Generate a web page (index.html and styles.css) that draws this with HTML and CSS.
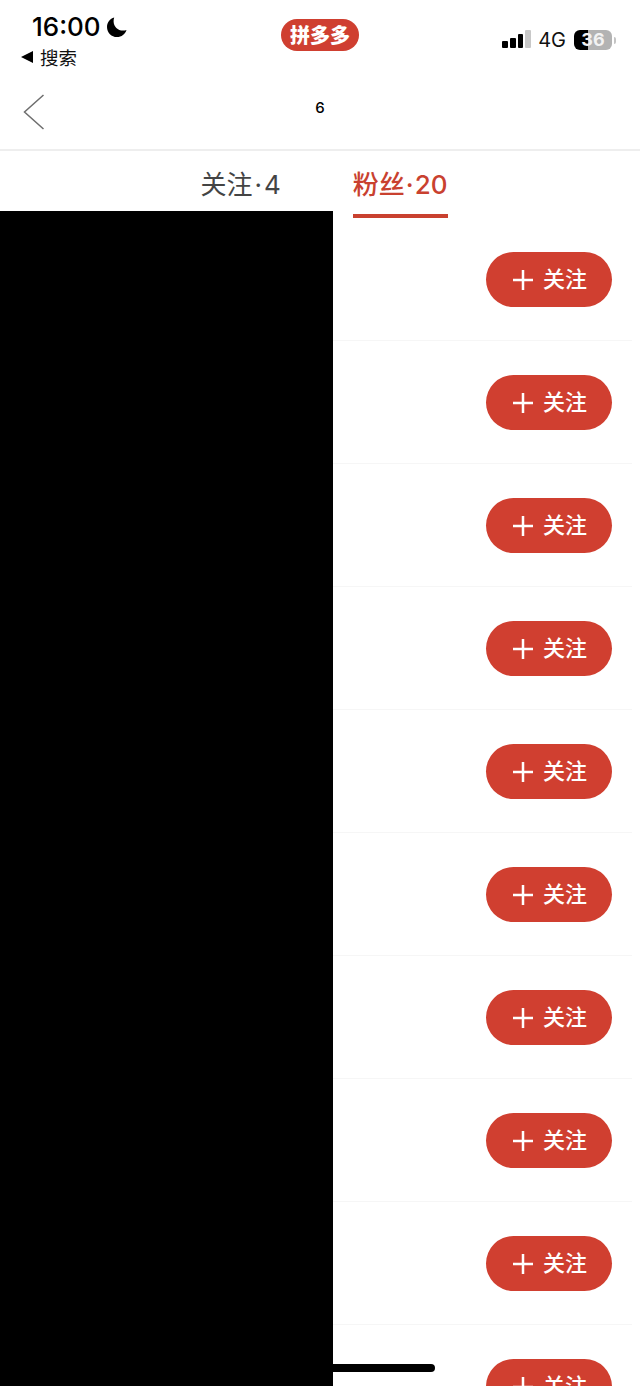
FILE: index.html
```html
<!DOCTYPE html>
<html lang="zh-CN">
<head>
<meta charset="UTF-8" />
<meta name="viewport" content="width=device-width, initial-scale=1" />
<title>粉丝</title>
<link rel="stylesheet" href="styles.css">
</head>
<body>
<div class="page">
  <div class="status">
    <div class="status-left">
      <div class="time-line">
        <span class="time">16:00</span>
        <svg class="moon" viewBox="0 0 20 20"><path d="M7.2 0.4C3 1.6 0 5.4 0 9.9 0 15.5 4.5 20 10 20c4.500 0 8.300-3 9.500-7.100-1.100 0.500-2.300 0.700-3.500 0.700-5.200 0-9.400-4.200-9.400-9.400 0-1.300 0.200-2.600 0.600-3.800z" fill="#000"/></svg>
      </div>
      <div class="back-app"><span class="back-arrow"></span>搜索</div>
    </div>
    <div class="app-pill">拼多多</div>
    <div class="status-right">
      <div class="signal"><i class="b1"></i><i class="b2"></i><i class="b3"></i><i class="b4"></i></div>
      <span class="net">4G</span>
      <div class="battery"><span>36</span></div>
      <div class="battery-tip"></div>
    </div>
  </div>

  <div class="nav">
    <svg class="back" viewBox="0 0 22 36"><path d="M20.500 1L1.500 18l19 17" fill="none" stroke="#6e6e6e" stroke-width="1.500"/></svg>
    <div class="title">6</div>
  </div>

  <div class="tabs">
    <div class="tab">关注<span class="dot">·</span>4</div>
    <div class="tab active">粉丝<span class="dot">·</span>20</div>
  </div>

  <div class="list">
    <div class="row"><button class="follow"><svg class="plus" viewBox="0 0 20 20"><path d="M10 0v20M0 10h20"/></svg><span class="follow-text">关注</span></button></div>
    <div class="row"><button class="follow"><svg class="plus" viewBox="0 0 20 20"><path d="M10 0v20M0 10h20"/></svg><span class="follow-text">关注</span></button></div>
    <div class="row"><button class="follow"><svg class="plus" viewBox="0 0 20 20"><path d="M10 0v20M0 10h20"/></svg><span class="follow-text">关注</span></button></div>
    <div class="row"><button class="follow"><svg class="plus" viewBox="0 0 20 20"><path d="M10 0v20M0 10h20"/></svg><span class="follow-text">关注</span></button></div>
    <div class="row"><button class="follow"><svg class="plus" viewBox="0 0 20 20"><path d="M10 0v20M0 10h20"/></svg><span class="follow-text">关注</span></button></div>
    <div class="row"><button class="follow"><svg class="plus" viewBox="0 0 20 20"><path d="M10 0v20M0 10h20"/></svg><span class="follow-text">关注</span></button></div>
    <div class="row"><button class="follow"><svg class="plus" viewBox="0 0 20 20"><path d="M10 0v20M0 10h20"/></svg><span class="follow-text">关注</span></button></div>
    <div class="row"><button class="follow"><svg class="plus" viewBox="0 0 20 20"><path d="M10 0v20M0 10h20"/></svg><span class="follow-text">关注</span></button></div>
    <div class="row"><button class="follow"><svg class="plus" viewBox="0 0 20 20"><path d="M10 0v20M0 10h20"/></svg><span class="follow-text">关注</span></button></div>
    <div class="row"><button class="follow"><svg class="plus" viewBox="0 0 20 20"><path d="M10 0v20M0 10h20"/></svg><span class="follow-text">关注</span></button></div>
  </div>

  <!-- redaction block and home indicator sit over the list -->
  <div class="redact"></div>
  <div class="home-bar"></div>
</div>
</body>
</html>
```

FILE: styles.css
```css
* { box-sizing: border-box; }
html, body { margin: 0; padding: 0; background: #fff; }
body { font-family: Inter, "Noto Sans CJK SC", sans-serif; color: #000; }

.page {
  position: relative; width: 640px; height: 1386px; overflow: hidden; background: #fff;
}

/* status bar */
.status {
  display: grid; grid-template-columns: 1fr auto 1fr; height: 76px; padding: 0 21px;
}
.status-left { padding-top: 9px; }
.time-line { display: flex; align-items: center; height: 36px; padding-left: 11px; }
.time { font-size: 26px; font-weight: 500; line-height: 36px; }
.moon { width: 20px; height: 20px; margin-left: 6px; margin-top: -1px; }
.back-app {
  display: flex; align-items: center; font-size: 18.500px; line-height: 26px; margin-top: -1px;
  font-family: "Noto Sans CJK SC", sans-serif; color: #111;
}
.back-arrow {
  width: 0; height: 0; margin-right: 7px;
  border-top: 6px solid transparent; border-bottom: 6px solid transparent; border-right: 12px solid #000;
}
.app-pill {
  align-self: start; margin-top: 19px; width: 78px; height: 32px; border-radius: 16px;
  background: #cf3f30; color: #fff; text-align: center; line-height: 31px;
  font-family: "Noto Sans CJK SC", sans-serif; font-size: 20px; font-weight: 900;
}
.status-right {
  display: flex; justify-content: flex-end; align-items: center; height: 36px;
  margin-top: 22px; padding-right: 7px;
}
.signal { display: flex; align-items: flex-end; gap: 2px; height: 18px; margin-right: 7px; margin-top: -2px; }
.signal i { display: block; width: 5.750px; background: #000; border-radius: 1px; }
.signal .b1 { height: 7px; }
.signal .b2 { height: 10px; }
.signal .b3 { height: 14px; }
.signal .b4 { height: 18px; background: #c8c8c8; }
.net { font-size: 20px; line-height: 36px; color: #111; margin-right: 8px; }
.battery {
  width: 38px; height: 20px; border-radius: 6px; text-align: center;
  background: linear-gradient(to right, #000 36%, #b3b3b3 36%);
  color: #f2f2f2; font-size: 18px; font-weight: 700; line-height: 20px;
}
.battery-tip { width: 2px; height: 7px; margin-left: 2px; margin-right: -4px; background: #c4c4c4; border-radius: 0 2px 2px 0; }

/* nav */
.nav {
  position: relative; display: flex; justify-content: center; height: 75px;
  border-bottom: 2px solid #eeeeee; padding-top: 23px;
}
.back { position: absolute; left: 23px; top: 18px; width: 22px; height: 36px; }
.title { font-size: 15px; font-weight: 500; line-height: 18px; }

/* tabs */
.tabs {
  display: flex; justify-content: center; gap: 72px; height: 67px; padding-left: 8px;
}
.tab { font-size: 26px; line-height: 67px; color: #444; height: 67px; white-space: nowrap; }
.tab.active { color: #c9412f; font-weight: 500; border-bottom: 4px solid #c9412f; }
.dot { margin: 0 2px; }
.tab.active .dot { margin: 0 1px; }

/* list */
.row {
  display: flex; justify-content: flex-end; height: 123px; padding: 34px 20px 0 0;
  margin-right: 8px; border-bottom: 1px solid #f6f6f6;
}
.follow {
  display: flex; align-items: center; justify-content: center; width: 126px; height: 55px;
  border: none; border-radius: 28px; background: #d03f30; color: #fff; padding: 0 0 0 2px;
  font-family: "Noto Sans CJK SC", sans-serif; font-size: 22px; font-weight: 500;
}
.follow-text { line-height: 26px; margin-bottom: 5px; }
.plus { width: 20px; height: 20px; margin-right: 10px; stroke: #fff; stroke-width: 2.500; fill: none; }

/* overlays */
.redact { position: absolute; left: 0; top: 211px; width: 333px; height: 1175px; background: #000; }
.home-bar { position: absolute; left: 300px; top: 1364px; width: 135px; height: 8px; border-radius: 4px; background: #000; }
```
